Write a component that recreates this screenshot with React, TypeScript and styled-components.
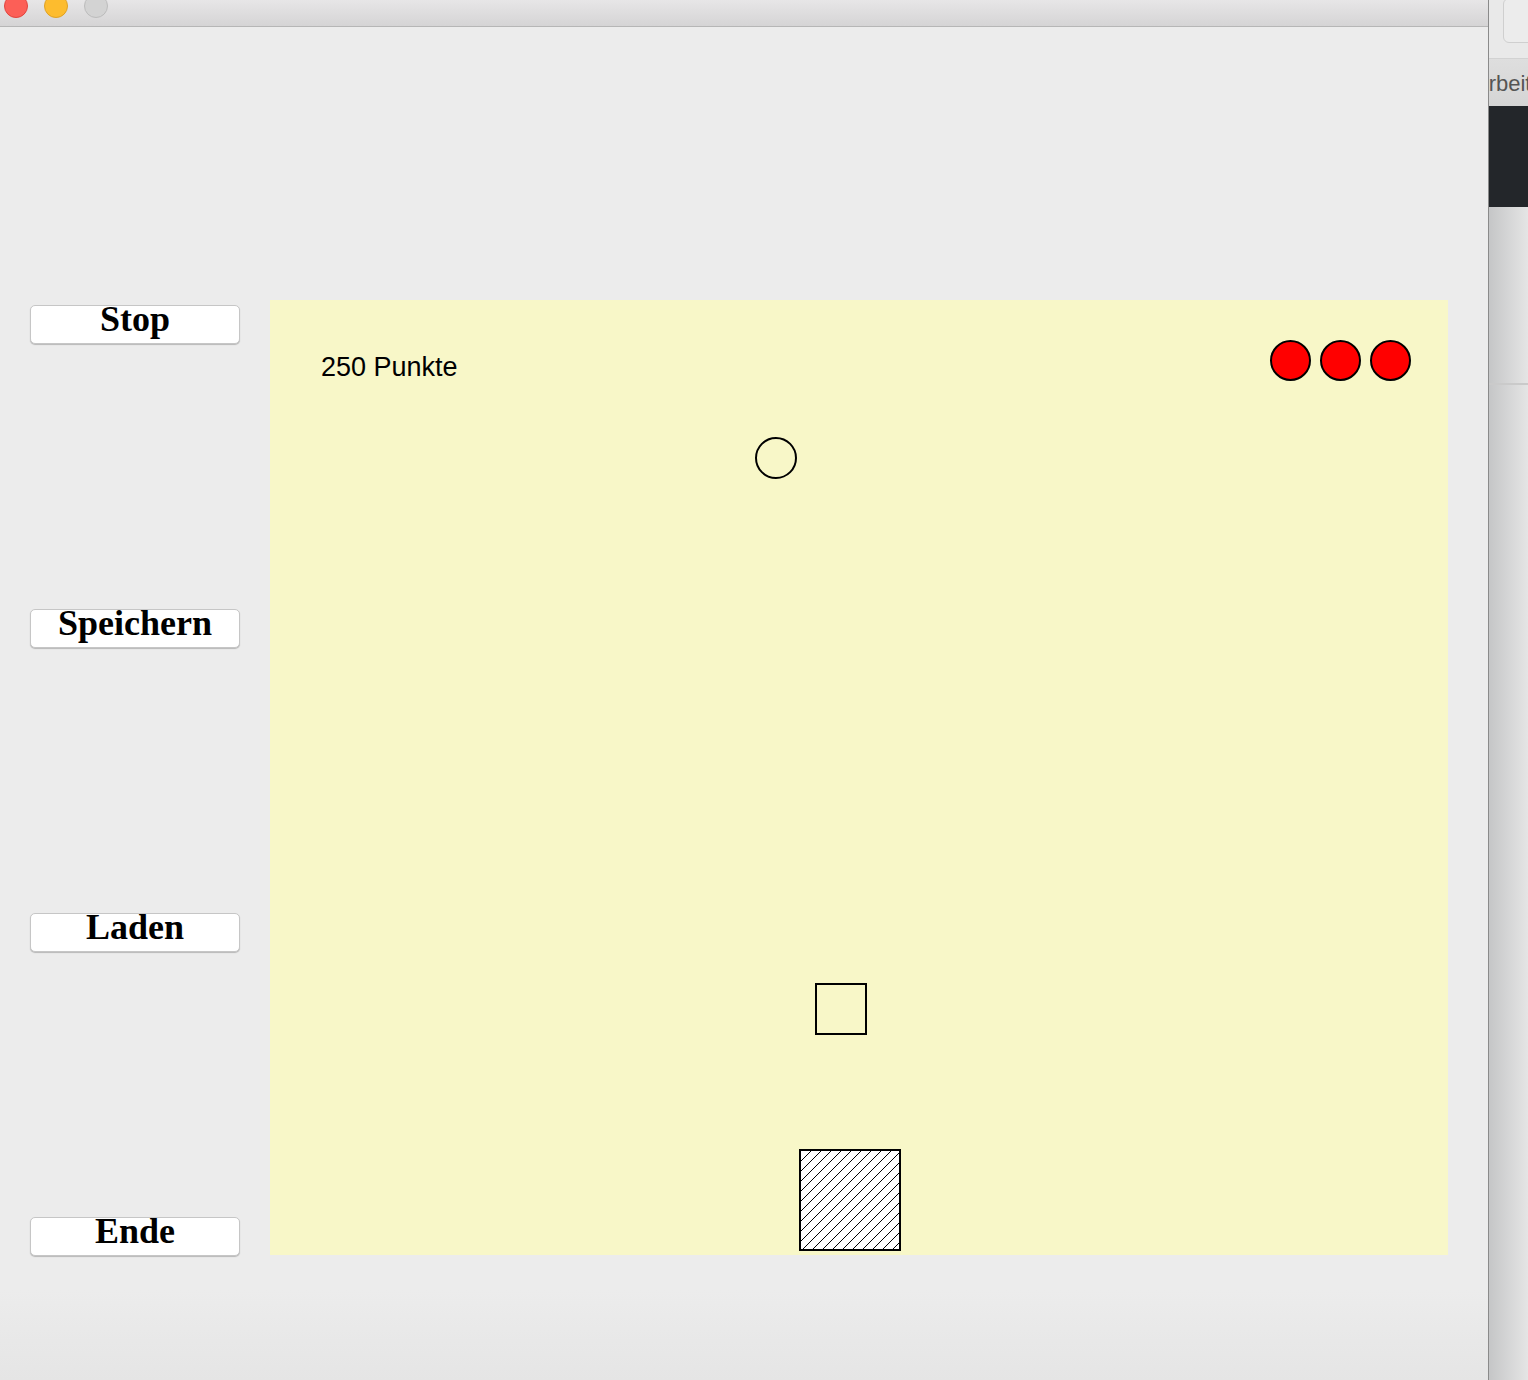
import React from "react";
import styled, { createGlobalStyle } from "styled-components";

const Global = createGlobalStyle`
  html, body { margin: 0; padding: 0; background: #ececec; overflow: hidden; }
  #root { width: 1528px; height: 1380px; }
`;

const Desktop = styled.div`
  display: flex;
  width: 1528px;
  height: 1380px;
  overflow: hidden;
`;

const MainWindow = styled.div`
  width: 1488px;
  flex: none;
  display: flex;
  flex-direction: column;
  background: linear-gradient(#ececec 0, #ececec 1290px, #e5e5e5 1380px);
`;

const TitleBar = styled.div`
  height: 26px;
  flex: none;
  border-bottom: 1px solid #b6b6b6;
  background: linear-gradient(#e7e6e7, #d5d4d5);
  display: flex;
  align-items: flex-start;
  gap: 16px;
  padding-left: 4px;
  overflow: hidden;
`;

const Light = styled.span<{ $c: string; $b: string }>`
  width: 24px;
  height: 24px;
  flex: none;
  box-sizing: border-box;
  border-radius: 50%;
  margin-top: -6px;
  background: ${(p) => p.$c};
  border: 1px solid ${(p) => p.$b};
`;

const Content = styled.div`
  display: flex;
  align-items: flex-start;
  gap: 30px;
  padding: 273px 0 0 30px;
`;

const ButtonColumn = styled.div`
  width: 210px;
  height: 956px;
  box-sizing: border-box;
  padding-top: 5px;
  display: flex;
  flex-direction: column;
  justify-content: space-between;
  flex: none;
`;

const GameButton = styled.button`
  width: 210px;
  height: 39px;
  box-sizing: border-box;
  margin: 0;
  padding: 0;
  background: #ffffff;
  border: 1px solid #c6c6c6;
  border-radius: 5px;
  box-shadow: 0 1px 1px rgba(0, 0, 0, 0.22);
  display: flex;
  justify-content: center;
  align-items: flex-start;
  overflow: visible;
  font-family: "Liberation Serif", "Times New Roman", serif;
  font-weight: bold;
  font-size: 36px;
  line-height: 27px;
  color: #000;
  cursor: pointer;
`;

const Field = styled.div`
  position: relative;
  width: 1178px;
  height: 955px;
  flex: none;
  background: #f8f7c8;
`;

const Score = styled.div`
  position: absolute;
  left: 51px;
  top: 54px;
  font-family: "Liberation Sans", Arial, sans-serif;
  font-size: 27px;
  line-height: 27px;
  color: #000;
  white-space: nowrap;
`;

const Lives = styled.div`
  position: absolute;
  left: 1000px;
  top: 40px;
  display: flex;
  gap: 10px;
`;

const Life = styled.span`
  width: 41px;
  height: 41px;
  margin-right: -1px;
  box-sizing: border-box;
  border-radius: 50%;
  border: 2px solid #000;
  background: #ff0000;
`;

const Sprite = styled.div<{ $x: number; $y: number; $size: number; $round?: boolean }>`
  position: absolute;
  left: ${(p) => p.$x}px;
  top: ${(p) => p.$y}px;
  width: ${(p) => p.$size}px;
  height: ${(p) => p.$size}px;
  box-sizing: border-box;
  border: 2px solid #000;
  border-radius: ${(p) => (p.$round ? "50%" : "0")};
  background: transparent;
`;

const HatchSvg = styled.svg`
  display: block;
  width: 100%;
  height: 100%;
`;

const SideWindow = styled.div`
  flex: 1;
  display: flex;
  flex-direction: column;
  border-left: 1px solid #8a8a8a;
  overflow: hidden;
`;

const SideToolbar = styled.div`
  height: 58px;
  flex: none;
  background: #e9e9e9;
  border-bottom: 1px solid #d2d2d2;
  padding-left: 14px;
`;

const SideToolButton = styled.div`
  width: 60px;
  height: 45px;
  margin-top: -2px;
  box-sizing: border-box;
  border: 1px solid #cfcfcf;
  border-radius: 6px;
  background: #ececec;
`;

const SideTab = styled.div`
  height: 47px;
  flex: none;
  display: flex;
  align-items: center;
  background: linear-gradient(#dedede, #d5d5d5);
  font-family: "Liberation Sans", Arial, sans-serif;
  font-size: 22px;
  color: #555;
  white-space: nowrap;
`;

const TabText = styled.span`
  margin-left: -15px;
  margin-top: 2px;
`;

const DarkBand = styled.div`
  height: 101px;
  flex: none;
  background: #23262a;
`;

const SidePanel = styled.div<{ $h?: number }>`
  ${(p) => (p.$h ? `height: ${p.$h}px; flex: none;` : "flex: 1;")}
  background: linear-gradient(to right, #c5c6c7, #e5e5e5);
`;

const SideDivider = styled.div`
  height: 2px;
  flex: none;
  background: #cacaca;
`;

const buttons = ["Stop", "Speichern", "Laden", "Ende"];

export default function App() {
  return (
    <>
      <Global />
      <Desktop>
        <MainWindow>
          <TitleBar>
            <Light $c="#fc5f57" $b="#e1443e" />
            <Light $c="#fdbc2e" $b="#dfa124" />
            <Light $c="#d3d3d3" $b="#bcbcbc" />
          </TitleBar>
          <Content>
            <ButtonColumn>
              {buttons.map((b) => (
                <GameButton key={b}>{b}</GameButton>
              ))}
            </ButtonColumn>
            <Field>
              <Score>250 Punkte</Score>
              <Lives>
                <Life />
                <Life />
                <Life />
              </Lives>
              <Sprite $x={485} $y={137} $size={42} $round />
              <Sprite $x={545} $y={683} $size={52} />
              <Sprite $x={529} $y={849} $size={102}>
                <HatchSvg viewBox="0 0 98 98" shapeRendering="crispEdges">
                  <defs>
                    <pattern id="hatch" width="10" height="10" patternUnits="userSpaceOnUse">
                      <rect width="10" height="10" fill="#fff" />
                      <path d="M-1 11 L11 -1" stroke="#000" strokeWidth="1" />
                    </pattern>
                  </defs>
                  <rect width="98" height="98" fill="url(#hatch)" />
                </HatchSvg>
              </Sprite>
            </Field>
          </Content>
        </MainWindow>
        <SideWindow>
          <SideToolbar>
            <SideToolButton />
          </SideToolbar>
          <SideTab>
            <TabText>Arbeitsbereich</TabText>
          </SideTab>
          <DarkBand />
          <SidePanel $h={176} />
          <SideDivider />
          <SidePanel />
        </SideWindow>
      </Desktop>
    </>
  );
}
